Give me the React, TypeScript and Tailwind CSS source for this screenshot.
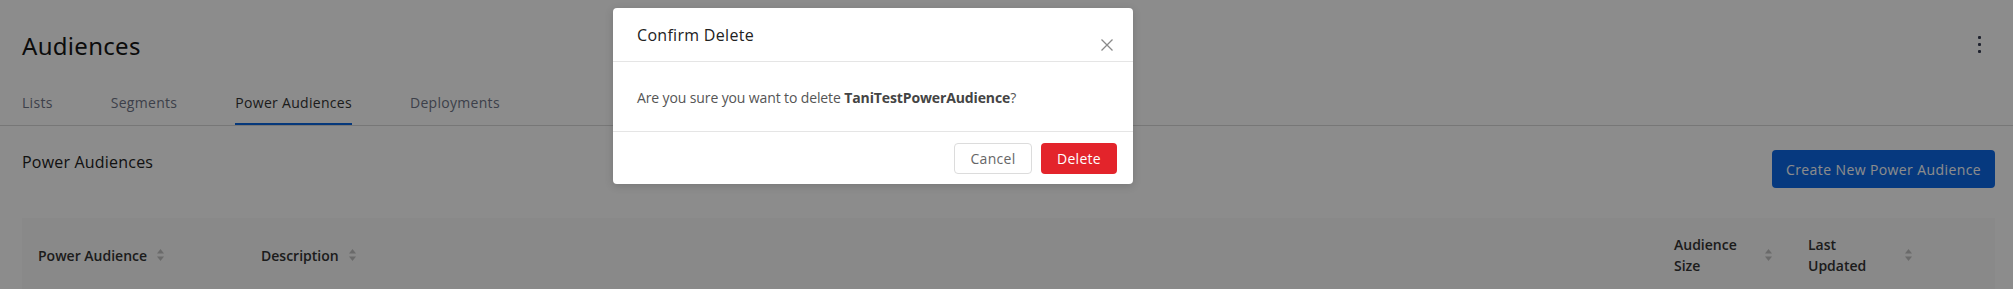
import React from "react";

const SortIcon = () => (
  <svg width="7" height="12" viewBox="0 0 7 12" className="shrink-0">
    <path d="M3.5 0 L7 4.5 L0 4.5 Z" fill="#c2c2c2" />
    <path d="M0 7.5 L7 7.5 L3.5 12 Z" fill="#c2c2c2" />
  </svg>
);

export default function App() {
  const font = { fontFamily: '"Open Sans", "Liberation Sans", sans-serif' };
  return (
    <div className="relative w-[2013px] h-[289px] overflow-hidden bg-white" style={font}>
      {/* Page */}
      <div className="flex flex-col">
        <div className="flex items-center justify-between pl-[22px] pr-[32px] pt-[27px] h-[64px]">
          <h1 className="text-[24px] leading-[32px] text-[#161616] tracking-[0.3px]" style={{ fontFamily: '"Noto Sans", sans-serif' }}>Audiences</h1>
          <div className="flex flex-col gap-[4px] items-center -mt-[2px]">
            <span className="block w-[3px] h-[3px] bg-[#3a3f55] rounded-[1px]" />
            <span className="block w-[3px] h-[3px] bg-[#3a3f55] rounded-[1px]" />
            <span className="block w-[3px] h-[3px] bg-[#3a3f55] rounded-[1px]" />
          </div>
        </div>
        <div className="flex gap-[58px] pl-[22px] pt-[28px] border-b border-[#d9d9d9] text-[14px] tracking-[0.3px]">
          <div className="pb-[12px] text-[#6f7587]">Lists</div>
          <div className="pb-[12px] text-[#6f7587]">Segments</div>
          <div className="pb-[10px] text-[#333] border-b-2 border-[#0a66e0]">Power Audiences</div>
          <div className="pb-[12px] text-[#6f7587]">Deployments</div>
        </div>
        <div className="flex justify-between items-start pl-[22px] pr-[18px] pt-[24px]">
          <div className="text-[16px] leading-[24px] text-[#222] tracking-[0.2px]">Power Audiences</div>
          <button className="h-[38px] w-[223px] rounded-[4px] bg-[#0b69e8] text-white text-[14px] tracking-[0.4px]">Create New Power Audience</button>
        </div>
        <div className="mt-[30px] ml-[22px] mr-[18px] bg-[#f9f9f9] h-[80px] flex items-start pt-[16px] text-[14px] font-semibold text-[#333]">
          <div className="w-[223px] pl-[16px] h-[42px] flex items-center gap-[10px]">
            <span>Power Audience</span>
            <SortIcon />
          </div>
          <div className="flex-1 pl-[16px] h-[42px] flex items-center gap-[10px]">
            <span>Description</span>
            <SortIcon />
          </div>
          <div className="w-[134px] pl-[16px] h-[42px] flex items-center gap-[8px]">
            <span className="w-[83px] leading-[21px]">Audience<br />Size</span>
            <SortIcon />
          </div>
          <div className="w-[203px] pl-[16px] h-[42px] flex items-center gap-[8px]">
            <span className="w-[89px] leading-[21px]">Last<br />Updated</span>
            <SortIcon />
          </div>
        </div>
      </div>

      {/* Overlay */}
      <div className="absolute inset-0 bg-black/45" />

      {/* Modal */}
      <div className="absolute left-[613px] top-[8px] w-[520px] bg-white rounded-[4px] shadow-[0_2px_8px_rgba(0,0,0,0.15)]">
        <div className="relative h-[54px] border-b border-[#e5e5e5] pl-[24px] pt-[15px]">
          <div className="text-[16px] leading-[24px] font-medium text-[#222] tracking-[0.3px]">Confirm Delete</div>
          <svg className="absolute left-[488px] top-[31px]" width="12" height="12" viewBox="0 0 12 12">
            <path d="M0.5 0.5 L11.5 11.5 M11.5 0.5 L0.5 11.5" stroke="#8a8a8a" strokeWidth="1.3" />
          </svg>
        </div>
        <div className="h-[70px] border-b border-[#e5e5e5] pl-[24px] flex items-center text-[14px] text-[#555] tracking-[-0.12px]">
          <span className="mt-[2px]">
            Are you sure you want to delete <b className="font-bold text-[#444]">TaniTestPowerAudience</b>?
          </span>
        </div>
        <div className="h-[52px] flex items-center justify-end gap-[9px] pr-[16px]">
          <button className="h-[31px] w-[78px] rounded-[4px] border border-[#dcdcdc] text-[14px] text-[#666] bg-white tracking-[0.3px]">Cancel</button>
          <button className="h-[31px] w-[76px] rounded-[4px] bg-[#e3242b] text-[14px] text-white tracking-[0.3px]">Delete</button>
        </div>
      </div>
    </div>
  );
}
